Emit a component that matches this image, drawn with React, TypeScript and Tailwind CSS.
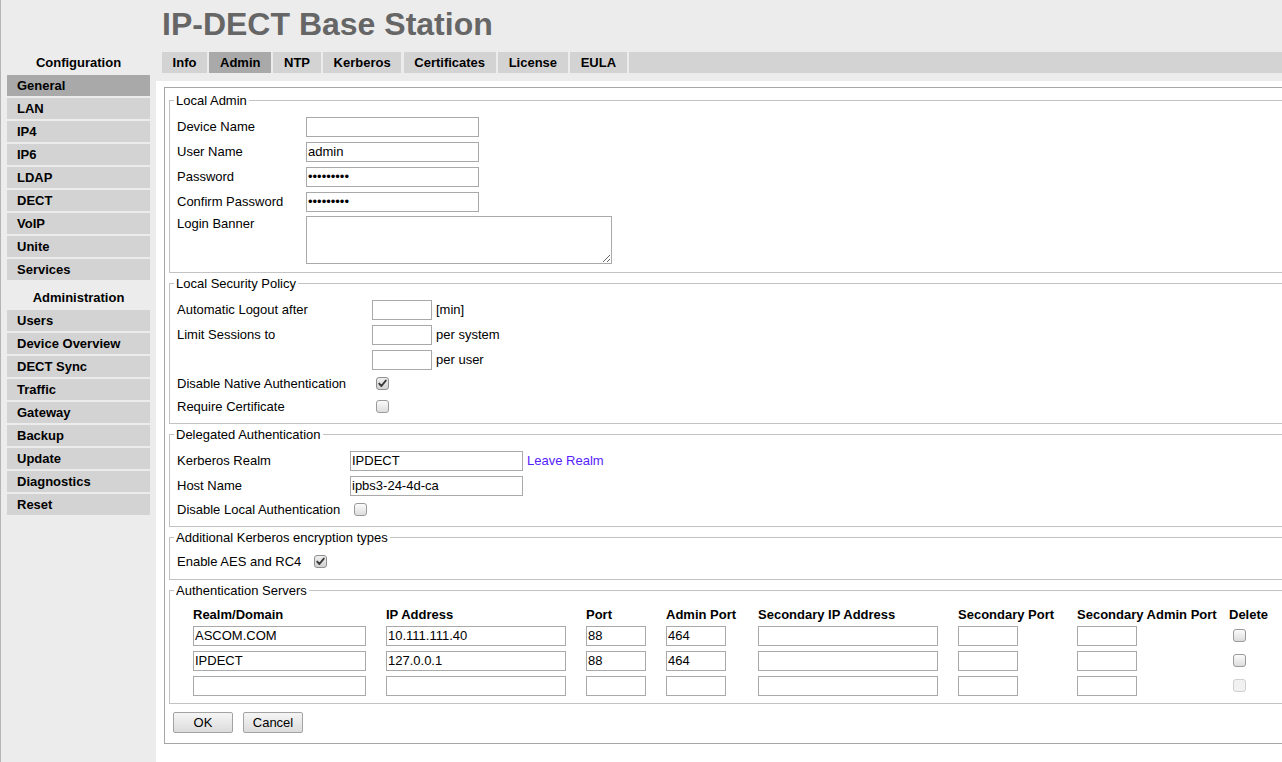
import React from "react";

const configItems = ["General", "LAN", "IP4", "IP6", "LDAP", "DECT", "VoIP", "Unite", "Services"];
const adminItems = ["Users", "Device Overview", "DECT Sync", "Traffic", "Gateway", "Backup", "Update", "Diagnostics", "Reset"];
const tabs = ["Info", "Admin", "NTP", "Kerberos", "Certificates", "License", "EULA"];

function Check({ checked = false, disabled = false }: { checked?: boolean; disabled?: boolean }) {
  return (
    <span
      className={
        "ml-[4px] inline-flex h-[13px] w-[13px] shrink-0 items-center justify-center rounded-[3px] border " +
        (disabled
          ? "border-[#cfcfcf] bg-[#f1f1f1]"
          : checked
          ? "border-[#8f8f8f] bg-linear-to-b from-[#efefef] to-[#d2d2d2]"
          : "border-[#9a9a9a] bg-linear-to-b from-[#fbfbfb] to-[#dddddd]")
      }
    >
      {checked && (
        <svg width="11" height="11" viewBox="0 0 11 11">
          <path d="M2.2 5.6 L4.4 8 L8.8 2.6" fill="none" stroke="#3a3a3a" strokeWidth="1.9" strokeLinecap="round" strokeLinejoin="round" />
        </svg>
      )}
    </span>
  );
}

function TextInput({ w, value = "", type = "text" }: { w: string; value?: string; type?: string }) {
  return (
    <input
      type={type}
      readOnly
      value={value}
      className={
        w +
        " h-[20px] border border-[#a9a9a9] bg-white px-[1px] text-[13px] text-black outline-none font-['Liberation_Sans',Arial,sans-serif]"
      }
    />
  );
}

function Fieldset({ legend, className, children }: { legend: string; className?: string; children: React.ReactNode }) {
  return (
    <fieldset className={"border border-[#c3c3c3] " + (className ?? "")}>
      <legend className="ml-[4px] px-[2px] leading-[15px]">{legend}</legend>
      <div className="pl-[7px]">{children}</div>
    </fieldset>
  );
}

function Row({ children }: { children: React.ReactNode }) {
  return <div className="flex h-[25px] items-center">{children}</div>;
}

function CRow({ children }: { children: React.ReactNode }) {
  return <div className="flex h-[23px] items-center">{children}</div>;
}

export default function App() {
  const servers = [
    { realm: "ASCOM.COM", ip: "10.111.111.40", port: "88", admin: "464", disabled: false },
    { realm: "IPDECT", ip: "127.0.0.1", port: "88", admin: "464", disabled: false },
    { realm: "", ip: "", port: "", admin: "", disabled: true },
  ];
  return (
    <div className="flex h-[762px] w-[1282px] overflow-hidden bg-[#ececec] text-[13px] text-black font-['Liberation_Sans',Arial,sans-serif]">
      <aside className="w-[156px] shrink-0 border-l border-[#b4b4b4] pl-[6px] pr-[6px] pt-[52px]">
        <div className="flex flex-col gap-[2px]">
          <div className="h-[21px] text-center font-bold leading-[21px]">Configuration</div>
          {configItems.map((it, i) => (
            <div
              key={it}
              className={"h-[21px] pl-[10px] font-bold leading-[21px] " + (i === 0 ? "bg-[#a9a9a9]" : "bg-[#d3d3d3]")}
            >
              {it}
            </div>
          ))}
          <div className="mt-[5px] h-[21px] text-center font-bold leading-[21px]">Administration</div>
          {adminItems.map((it) => (
            <div key={it} className="h-[21px] bg-[#d3d3d3] pl-[10px] font-bold leading-[21px]">
              {it}
            </div>
          ))}
        </div>
      </aside>

      <main className="flex min-w-0 flex-1 flex-col">
        <div className="h-[52px] pl-[6px] pt-[4px] text-[32px] font-bold leading-[40px] text-[#666666]">
          IP-DECT Base Station
        </div>
        <div className="ml-[6px] flex h-[21px] gap-[2.4px]">
          {tabs.map((t) => (
            <div
              key={t}
              className={"px-[10.6px] font-bold leading-[21px] " + (t === "Admin" ? "bg-[#a9a9a9]" : "bg-[#d3d3d3]")}
            >
              {t}
            </div>
          ))}
          <div className="flex-1 bg-[#d3d3d3]" />
        </div>
        <div className="mt-[8px] flex-1 bg-white pl-[8px] pt-[6px]">
          <div className="w-[1200px] border border-[#a6a6a6] px-[4px] pb-[10px] pt-[5px]">
            <Fieldset legend="Local Admin">
              <div className="pb-[6px] pt-[6px]">
                <Row>
                  <div className="w-[129px] shrink-0">Device Name</div>
                  <TextInput w="w-[173px]" />
                </Row>
                <Row>
                  <div className="w-[129px] shrink-0">User Name</div>
                  <TextInput w="w-[173px]" value="admin" />
                </Row>
                <Row>
                  <div className="w-[129px] shrink-0">Password</div>
                  <TextInput w="w-[173px]" type="password" value="123456789" />
                </Row>
                <Row>
                  <div className="w-[129px] shrink-0">Confirm Password</div>
                  <TextInput w="w-[173px]" type="password" value="123456789" />
                </Row>
                <div className="flex items-start py-[2px]">
                  <div className="w-[129px] shrink-0 leading-[15px]">Login Banner</div>
                  <textarea
                    readOnly
                    className="h-[48px] w-[306px] border border-[#a9a9a9] bg-white px-[1px] text-[13px] outline-none"
                  />
                </div>
              </div>
            </Fieldset>

            <Fieldset legend="Local Security Policy" className="mt-[3px]">
              <div className="pb-[5px] pt-[6px]">
                <Row>
                  <div className="w-[195px] shrink-0">Automatic Logout after</div>
                  <TextInput w="w-[60px]" />
                  <span className="ml-[4px]">[min]</span>
                </Row>
                <Row>
                  <div className="w-[195px] shrink-0">Limit Sessions to</div>
                  <TextInput w="w-[60px]" />
                  <span className="ml-[4px]">per system</span>
                </Row>
                <Row>
                  <div className="w-[195px] shrink-0" />
                  <TextInput w="w-[60px]" />
                  <span className="ml-[4px]">per user</span>
                </Row>
                <CRow>
                  <div className="w-[195px] shrink-0">Disable Native Authentication</div>
                  <Check checked />
                </CRow>
                <CRow>
                  <div className="w-[195px] shrink-0">Require Certificate</div>
                  <Check />
                </CRow>
              </div>
            </Fieldset>

            <Fieldset legend="Delegated Authentication" className="mt-[3px]">
              <div className="pb-[5px] pt-[6px]">
                <Row>
                  <div className="w-[173px] shrink-0">Kerberos Realm</div>
                  <TextInput w="w-[173px]" value="IPDECT" />
                  <span className="ml-[4px] text-[#5522ff]">Leave Realm</span>
                </Row>
                <Row>
                  <div className="w-[173px] shrink-0">Host Name</div>
                  <TextInput w="w-[173px]" value="ipbs3-24-4d-ca" />
                </Row>
                <CRow>
                  <div className="w-[173px] shrink-0">Disable Local Authentication</div>
                  <Check />
                </CRow>
              </div>
            </Fieldset>

            <Fieldset legend="Additional Kerberos encryption types" className="mt-[3px]">
              <div className="pb-[6px] pt-[5px]">
                <CRow>
                  <div className="w-[133px] shrink-0">Enable AES and RC4</div>
                  <Check checked />
                </CRow>
              </div>
            </Fieldset>

            <Fieldset legend="Authentication Servers" className="mt-[3px]">
              <div className="pb-[5px] pl-[16px] pt-[7px]">
                <div className="grid h-[18px] grid-cols-[193px_200px_80px_92px_200px_119px_152px_60px] items-center font-bold">
                  <div>Realm/Domain</div>
                  <div>IP Address</div>
                  <div>Port</div>
                  <div>Admin Port</div>
                  <div>Secondary IP Address</div>
                  <div>Secondary Port</div>
                  <div>Secondary Admin Port</div>
                  <div>Delete</div>
                </div>
                {servers.map((s, i) => (
                  <div
                    key={i}
                    className="grid h-[25px] grid-cols-[193px_200px_80px_92px_200px_119px_152px_60px] items-center"
                  >
                    <div className="flex"><TextInput w="w-[173px]" value={s.realm} /></div>
                    <div className="flex"><TextInput w="w-[180px]" value={s.ip} /></div>
                    <div className="flex"><TextInput w="w-[60px]" value={s.port} /></div>
                    <div className="flex"><TextInput w="w-[60px]" value={s.admin} /></div>
                    <div className="flex"><TextInput w="w-[180px]" /></div>
                    <div className="flex"><TextInput w="w-[60px]" /></div>
                    <div className="flex"><TextInput w="w-[60px]" /></div>
                    <div className="flex"><Check disabled={s.disabled} /></div>
                  </div>
                ))}
              </div>
            </Fieldset>

            <div className="ml-[4px] mt-[8px] flex gap-[10px]">
              <button className="h-[21px] w-[60px] rounded-[2px] border border-[#a3a3a3] bg-linear-to-b from-[#f5f5f5] to-[#dcdcdc] text-[13px] leading-[19px] text-black">
                OK
              </button>
              <button className="h-[21px] w-[60px] rounded-[2px] border border-[#a3a3a3] bg-linear-to-b from-[#f5f5f5] to-[#dcdcdc] text-[13px] leading-[19px] text-black">
                Cancel
              </button>
            </div>
          </div>
        </div>
      </main>
    </div>
  );
}
